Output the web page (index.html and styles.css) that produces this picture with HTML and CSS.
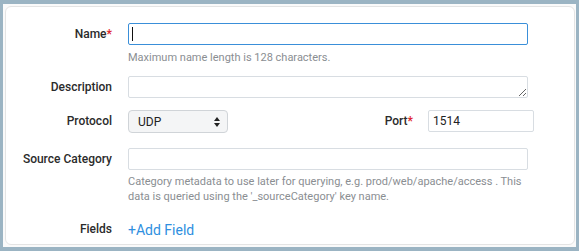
FILE: index.html
```html
<!DOCTYPE html>
<html>
<head>
<meta charset="utf-8">
<link rel="stylesheet" href="styles.css">
</head>
<body>
<div class="frame">
  <div class="card">
    <div class="form">
      <label class="label">Name<span class="req">*</span></label>
      <div class="field">
        <div class="input-wrap">
          <input class="input focused" type="text">
          <span class="caret"></span>
        </div>
        <div class="help">Maximum name length is 128 characters.</div>
      </div>

      <label class="label">Description</label>
      <div class="field">
        <textarea class="input textarea"></textarea>
      </div>

      <label class="label">Protocol</label>
      <div class="field row">
        <div class="select-wrap">
          <select class="select"><option>UDP</option></select>
          <svg class="arrows" width="6" height="10" viewBox="0 0 6 10"><path d="M3 0 L6 4 L0 4 Z M0 6 L6 6 L3 10 Z" fill="#222"/></svg>
        </div>
        <div class="port">
          <label class="label inline">Port<span class="req">*</span></label>
          <input class="input port-input" type="text" value="1514">
        </div>
      </div>

      <label class="label">Source Category</label>
      <div class="field">
        <input class="input" type="text">
        <div class="help two">Category metadata to use later for querying, e.g. prod/web/apache/access . This data is queried using the '_sourceCategory' key name.</div>
      </div>

      <label class="label">Fields</label>
      <div class="field">
        <a class="add" href="#">+Add Field</a>
      </div>
    </div>
  </div>
</div>
</body>
</html>
```

FILE: styles.css
```css
html, body {
  margin: 0;
  padding: 0;
}
body {
  background: #9bb4c3;
  width: 579px;
  height: 251px;
  overflow: hidden;
  font-family: Roboto, "Liberation Sans", sans-serif;
}
.frame {
  margin: 4px 3px 4px 3px;
  height: 239px;
  padding: 2px 1px 2px 2px;
  background: #fafafa;
}
.card {
  box-sizing: border-box;
  height: 239px;
  background: #fff;
  border: 1px solid #e4e4e4;
  border-radius: 6px;
  padding: 16px 0 0 0;
}
.form {
  display: grid;
  grid-template-columns: 106px 406px;
  column-gap: 16px;
  align-items: start;
}
.label {
  font-size: 12px;
  font-weight: 500;
  color: #2b2b2b;
  line-height: 22px;
  text-align: right;
  white-space: nowrap;
}
.req {
  color: #e0282e;
  font-weight: 700;
}
.field {
  display: flex;
  flex-direction: column;
}
.input-wrap {
  position: relative;
  width: 400px;
}
.input {
  box-sizing: border-box;
  width: 400px;
  height: 22px;
  margin: 0;
  border: 1px solid #d8dde2;
  border-radius: 2px;
  background: #fff;
  font-family: Roboto, "Liberation Sans", sans-serif;
  font-size: 12px;
  color: #222;
  padding: 0 5px;
  outline: none;
}
.focused {
  border-color: #3a8fd9;
}
.caret {
  position: absolute;
  left: 4px;
  top: 4px;
  width: 1px;
  height: 14px;
  background: #111;
}
.help {
  font-size: 11px;
  line-height: 15px;
  color: #8a8e92;
  margin-top: 5px;
  margin-bottom: 11px;
}
.help.two {
  margin-top: 4px;
  margin-bottom: 14px;
}
.textarea {
  display: block;
  resize: vertical;
  margin-bottom: 12px;
  min-height: 22px;
}
.row {
  flex-direction: row;
  justify-content: space-between;
  align-items: flex-start;
  margin-bottom: 15px;
}
.select-wrap {
  position: relative;
  width: 100px;
  height: 23px;
}
.select {
  appearance: none;
  -webkit-appearance: none;
  box-sizing: border-box;
  width: 100px;
  height: 23px;
  margin: 0;
  border: 1px solid #d0d4d8;
  border-radius: 4px;
  background: #f4f5f6;
  font-family: Roboto, "Liberation Sans", sans-serif;
  font-size: 12px;
  color: #222;
  padding: 0 9px;
  outline: none;
}
.arrows {
  position: absolute;
  right: 8px;
  top: 7px;
}
.port {
  display: flex;
  align-items: flex-start;
  gap: 15px;
}
.label.inline {
  line-height: 22px;
}
.port-input {
  width: 106px;
  padding: 0 4px;
}
.add {
  font-size: 14px;
  line-height: 20px;
  color: #2f8fe0;
  text-decoration: none;
  margin-top: 2px;
}
```
